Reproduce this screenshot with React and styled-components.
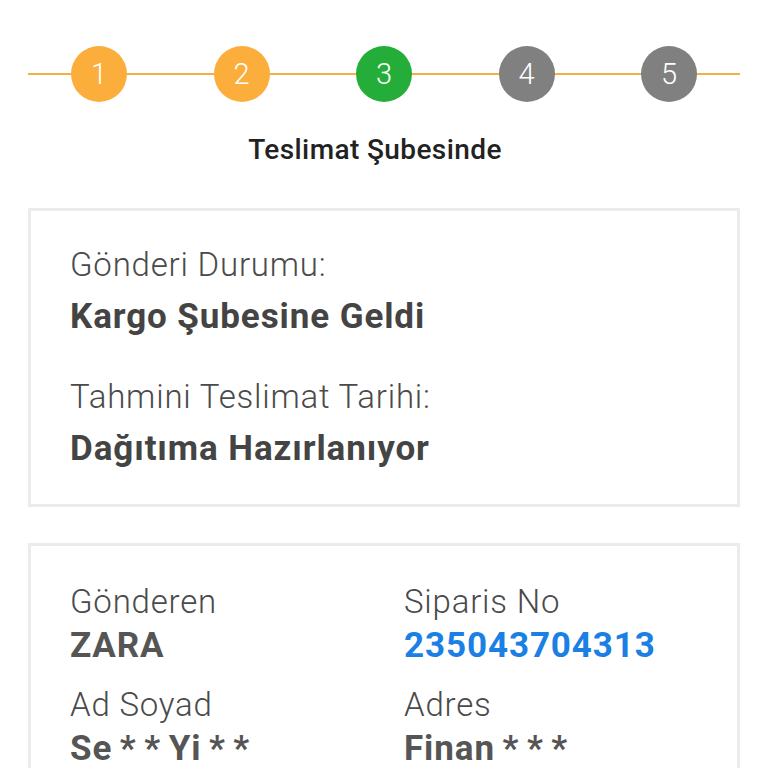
import React from "react";
import styled, { createGlobalStyle } from "styled-components";

const GlobalStyle = createGlobalStyle`
  body {
    margin: 0;
    background: #fff;
    font-family: Roboto, "Liberation Sans", sans-serif;
  }
`;

const steps = [
  { no: 1, color: "#fbae3c" },
  { no: 2, color: "#fbae3c" },
  { no: 3, color: "#24ae39" },
  { no: 4, color: "#808080" },
  { no: 5, color: "#808080" },
];

const App = () => {
  return (
    <>
      <GlobalStyle />
      <Page>
        <Stepper>
          {steps.map((s) => (
            <Step key={s.no} color={s.color}>
              {s.no}
            </Step>
          ))}
        </Stepper>

        <StepTitle>Teslimat Şubesinde</StepTitle>

        <Card>
          <Label>Gönderi Durumu:</Label>
          <Value>Kargo Şubesine Geldi</Value>
          <Label top="40px">Tahmini Teslimat Tarihi:</Label>
          <Value>Dağıtıma Hazırlanıyor</Value>
        </Card>

        <InfoCard>
          <InfoGrid>
            <Cell>
              <Label>Gönderen</Label>
              <SmallValue>ZARA</SmallValue>
            </Cell>
            <Cell>
              <Label>Siparis No</Label>
              <SmallValue blue>235043704313</SmallValue>
            </Cell>
            <Cell>
              <Label>Ad Soyad</Label>
              <SmallValue>Se * * Yi * *</SmallValue>
            </Cell>
            <Cell>
              <Label>Adres</Label>
              <SmallValue>Finan * * *</SmallValue>
            </Cell>
          </InfoGrid>
        </InfoCard>
      </Page>
    </>
  );
};

const Page = styled.div`
  width: 768px;
  height: 768px;
  overflow: hidden;
  display: flex;
  flex-direction: column;
`;

const Stepper = styled.div`
  position: relative;
  margin: 46px 28px 0;
  padding: 0 43px;
  display: flex;
  justify-content: space-between;
  align-items: center;

  &::before {
    content: "";
    position: absolute;
    left: 0;
    right: 0;
    top: 27px;
    height: 2px;
    background: #f4b143;
  }
`;

const Step = styled.div`
  position: relative;
  width: 56px;
  height: 56px;
  border-radius: 50%;
  background: ${(p) => p.color};
  color: #fff;
  font-size: 29px;
  font-weight: 300;
  display: flex;
  align-items: center;
  justify-content: center;
`;

const StepTitle = styled.div`
  margin-top: 32px;
  padding-right: 18px;
  text-align: center;
  font-size: 28px;
  line-height: 32px;
  font-weight: 500;
  letter-spacing: 0.4px;
  color: #222;
`;

const Card = styled.div`
  margin: 42px 28px 0;
  border: 3px solid #ebebeb;
  padding: 34px 39px 35px;
  display: flex;
  flex-direction: column;
`;

const InfoCard = styled(Card)`
  margin-top: 36px;
  padding-top: 36px;
`;

const Label = styled.div`
  margin-top: ${(p) => p.top || "0"};
  font-size: 33px;
  line-height: 40px;
  font-weight: 300;
  letter-spacing: 0.8px;
  color: #4a4a4a;
`;

const Value = styled.div`
  margin-top: 12px;
  font-size: 35px;
  line-height: 40px;
  font-weight: 700;
  letter-spacing: 0.9px;
  color: #444;
`;

const InfoGrid = styled.div`
  display: grid;
  grid-template-columns: 334px 1fr;
  row-gap: 19px;
`;

const Cell = styled.div`
  display: flex;
  flex-direction: column;
`;

const SmallValue = styled.div`
  margin-top: 4px;
  font-size: 35px;
  line-height: 40px;
  font-weight: 700;
  letter-spacing: 0.9px;
  word-spacing: -2px;
  color: ${(p) => (p.blue ? "#1b7fe3" : "#555")};
`;

export default App;
